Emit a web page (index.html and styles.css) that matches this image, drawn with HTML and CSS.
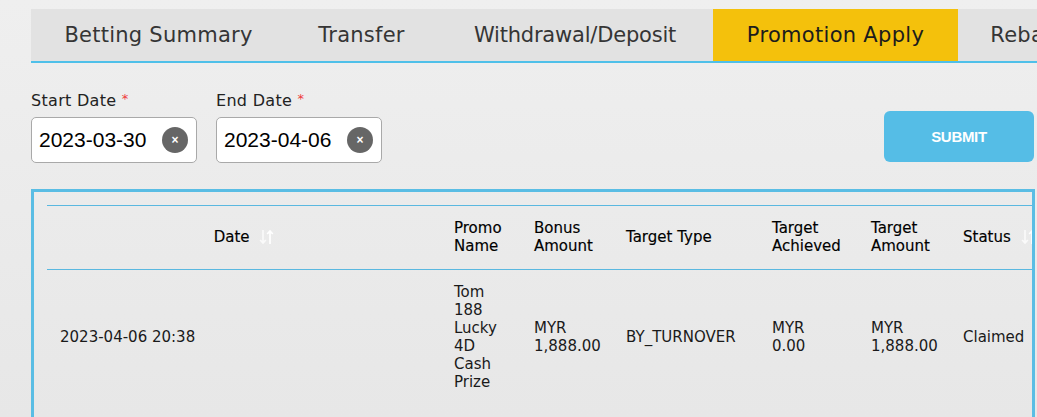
FILE: index.html
```html
<!DOCTYPE html>
<html lang="en">
<head>
<meta charset="utf-8">
<title>Promotion Apply</title>
<link rel="stylesheet" href="styles.css">
</head>
<body>
<div class="page">
  <nav class="tabs">
    <a class="tab tab-summary">Betting Summary</a>
    <a class="tab tab-transfer">Transfer</a>
    <a class="tab tab-wd">Withdrawal/Deposit</a>
    <a class="tab tab-promo active">Promotion Apply</a>
    <a class="tab tab-rebate">Rebate</a>
  </nav>

  <form class="filters">
    <div class="field">
      <label class="label">Start Date <span class="req">*</span></label>
      <div class="input">
        <span class="value">2023-03-30</span>
        <span class="clear">&times;</span>
      </div>
    </div>
    <div class="field">
      <label class="label">End Date <span class="req">*</span></label>
      <div class="input">
        <span class="value">2023-04-06</span>
        <span class="clear">&times;</span>
      </div>
    </div>
    <button type="button" class="submit">SUBMIT</button>
  </form>

  <div class="table-box">
    <table class="records">
      <colgroup>
        <col class="c-date"><col class="c-promo"><col class="c-bonus"><col class="c-type"><col class="c-ach"><col class="c-amt"><col class="c-status">
      </colgroup>
      <thead>
        <tr>
          <th class="center">Date <svg class="sort" viewBox="0 0 15 16" width="15" height="16"><path d="M4 1v13M1.2 11L4 14l2.8-3" fill="none" stroke="#fafafa" stroke-width="1.7"/><path d="M11 15V2M8.2 5L11 2l2.8 3" fill="none" stroke="#ffffff" stroke-width="1.7"/></svg></th>
          <th>Promo Name</th>
          <th>Bonus Amount</th>
          <th>Target Type</th>
          <th>Target Achieved</th>
          <th>Target Amount</th>
          <th>Status <svg class="sort" viewBox="0 0 15 16" width="15" height="16"><path d="M4 1v13M1.2 11L4 14l2.8-3" fill="none" stroke="#fafafa" stroke-width="1.7"/><path d="M11 15V2M8.2 5L11 2l2.8 3" fill="none" stroke="#ffffff" stroke-width="1.7"/></svg></th>
        </tr>
      </thead>
      <tbody>
        <tr>
          <td>2023-04-06 20:38</td>
          <td>Tom 188 Lucky 4D Cash Prize</td>
          <td><span class="cur">MYR</span> 1,888.00</td>
          <td>BY_TURNOVER</td>
          <td><span class="cur">MYR</span> 0.00</td>
          <td><span class="cur">MYR</span> 1,888.00</td>
          <td>Claimed</td>
        </tr>
      </tbody>
    </table>
  </div>
</div>
</body>
</html>
```

FILE: styles.css
```css
html, body {
  margin: 0;
  height: 100%;
}
body {
  background: linear-gradient(#efefef, #e7e7e7);
  font-family: "DejaVu Sans", "Noto Sans", sans-serif;
  color: #111;
  overflow: hidden;
}
.page {
  padding: 9px 0 0 31px;
  width: 1004px;
}

/* tabs */
.tabs {
  display: flex;
  white-space: nowrap;
  width: 1100px;
  background: #e2e2e2;
  border-bottom: 2px solid #4fc0e9;
  height: 52px;
}
.tab {
  display: flex;
  align-items: center;
  justify-content: center;
  flex: none;
  font-size: 21px;
  color: #353535;
  letter-spacing: 0.25px;
}
.tab-summary { width: 255px; }
.tab-transfer { width: 151px; }
.tab-wd { width: 276px; letter-spacing: -0.2px; }
.tab-promo { width: 245px; letter-spacing: 0.3px; }
.tab-rebate { width: 140px; }
.tab.active {
  background: #f4c10c;
  color: #1c1c1c;
}

/* filters */
.filters {
  display: flex;
  align-items: flex-start;
  gap: 19px;
  margin-top: 26px;
}
.field {
  display: flex;
  flex-direction: column;
}
.label {
  font-size: 16px;
  line-height: 20px;
  color: #222;
  margin-bottom: 6px;
  letter-spacing: 0.3px;
}
.req {
  color: #ef3b3b;
  font-size: 13px;
  vertical-align: 3px;
}
.input {
  width: 149px;
  height: 44px;
  background: #fff;
  border: 1px solid #a9a9a9;
  border-radius: 5px;
  display: flex;
  align-items: center;
  justify-content: space-between;
  padding: 0 8px 0 7px;
  box-sizing: content-box;
}
.value {
  font-family: "Liberation Sans", Arial, sans-serif;
  font-size: 21px;
  color: #000;
}
.clear {
  width: 26px;
  height: 26px;
  border-radius: 50%;
  background: #666;
  color: #fff;
  font-family: "Liberation Sans", Arial, sans-serif;
  font-size: 12px;
  font-weight: bold;
  display: flex;
  align-items: center;
  justify-content: center;
}
.submit {
  margin-left: auto;
  margin-top: 22px;
  margin-right: 1px;
  width: 150px;
  height: 51px;
  border: none;
  border-radius: 6px;
  background: #55bde6;
  color: #fff;
  font-family: "Liberation Sans", Arial, sans-serif;
  font-weight: bold;
  font-size: 15px;
  letter-spacing: -0.3px;
}

/* table */
.table-box {
  margin-top: 26px;
  border: 3px solid #5abde4;
  padding: 13px 0 0 13px;
  overflow: hidden;
  height: 400px;
  box-sizing: border-box;
}
.records {
  border-collapse: collapse;
  table-layout: fixed;
  width: 1010px;
  font-size: 15px;
  line-height: 18px;
}
.c-date { width: 394px; }
.c-promo { width: 80px; }
.c-bonus { width: 92px; }
.c-type { width: 146px; }
.c-ach { width: 99px; }
.c-amt { width: 92px; }
.c-status { width: 107px; }
.records thead tr {
  border-top: 1px solid #5ab8e0;
  border-bottom: 1px solid #5ab8e0;
}
.records th {
  text-align: left;
  font-weight: normal;
  color: #000;
  padding: 13px 13px 14px;
  vertical-align: middle;
  -webkit-text-stroke: 0.15px #000;
}
.records th.center {
  text-align: center;
}
.records td {
  padding: 13px;
  vertical-align: middle;
  color: #1a1a1a;
}
.cur {
  display: block;
}
.sort {
  vertical-align: -3px;
  margin-left: 5px;
}
```
